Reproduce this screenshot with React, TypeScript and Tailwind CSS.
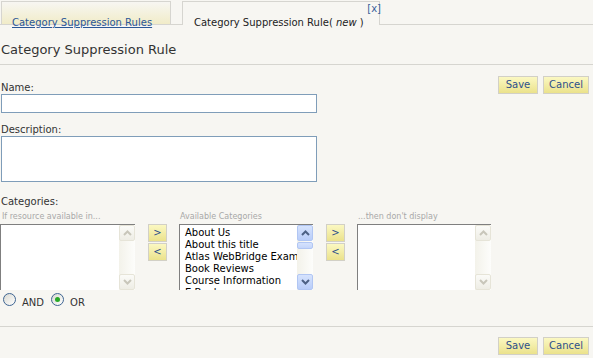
import React from 'react';

const yellowBtn =
  'flex items-center justify-center border border-[#d2d0c6] bg-linear-to-b from-[#fbf8c2] to-[#ebe28b] text-[#2d4f8a] text-[10px] leading-[12px]';

function Chevron({ up, color }: { up?: boolean; color: string }) {
  return (
    <svg width="9" height="6" viewBox="0 0 9 6">
      <path d={up ? 'M1 5 L4.5 1.5 L8 5' : 'M1 1 L4.5 4.5 L8 1'} fill="none" stroke={color} strokeWidth="2" />
    </svg>
  );
}

function Scrollbar({ active }: { active?: boolean }) {
  const btn = active
    ? 'h-[16px] rounded-[2px] border border-[#b1c6f3] bg-linear-to-b from-[#d6e3fd] to-[#b9cdf9] flex items-center justify-center'
    : 'h-[16px] rounded-[2px] border border-[#e6e4d8] bg-linear-to-b from-[#fbfbf8] to-[#eeede5] flex items-center justify-center';
  const arrow = active ? '#4d6185' : '#c8c6ba';
  return (
    <div className="w-[16px] h-full flex flex-col bg-linear-to-r from-[#f3f2ea] to-[#fdfdfb]">
      <div className={btn}>
        <Chevron up color={arrow} />
      </div>
      {active && (
        <div className="mt-[1px] h-[7px] rounded-[2px] border border-[#b1c6f3] bg-linear-to-b from-[#d6e3fd] to-[#c4d5fa]" />
      )}
      <div className="flex-1" />
      <div className={btn}>
        <Chevron color={arrow} />
      </div>
    </div>
  );
}

function ListBox({ items, active, width }: { items?: string[]; active?: boolean; width: string }) {
  return (
    <div className={`${width} h-[66px] flex border-t border-l border-[#7f7f7f] bg-white overflow-hidden`}>
      <div className="flex-1 overflow-hidden pt-[2px] pl-[5px] text-[10px] leading-[12px] text-black whitespace-nowrap">
        {items?.map((item) => (
          <div key={item}>{item}</div>
        ))}
      </div>
      <Scrollbar active={active} />
    </div>
  );
}

function MoveButtons() {
  return (
    <div className="pt-[13px] flex flex-col gap-[1px]">
      <div className={`${yellowBtn} w-[19px] h-[18px] text-[8px]`}>&gt;</div>
      <div className={`${yellowBtn} w-[19px] h-[18px] text-[8px]`}>&lt;</div>
    </div>
  );
}

function Radio({ checked }: { checked?: boolean }) {
  return (
    <span className="w-[13px] h-[13px] rounded-full border border-[#3f6592] bg-linear-to-br from-[#d9d9d2] to-white flex items-center justify-center">
      {checked && <span className="w-[5px] h-[5px] rounded-full bg-[#27a927]" />}
    </span>
  );
}

export default function App() {
  const categories = [
    'About Us',
    'About this title',
    'Atlas WebBridge Example',
    'Book Reviews',
    'Course Information',
    'E-Books',
  ];

  return (
    <div className="w-[593px] h-[358px] overflow-hidden bg-[#f7f6f2] text-[#333] font-['DejaVu_Sans',Verdana,sans-serif]">
      {/* tabs */}
      <div className="h-[25px] pt-[1px] flex border-b border-[#d6d5d0]">
        <div className="ml-[1px] w-[170px] h-[23px] border-t border-l border-r border-[#d6d5d0] bg-linear-to-b from-[#f7f6f2] to-[#f1ecc8] pl-[10px] pt-[7px]">
          <span className="text-[10px] leading-[12px] text-[#2b5797] underline">Category Suppression Rules</span>
        </div>
        <div className="relative ml-[11px] w-[198px] h-[24px] border-t border-l border-r border-[#d6d5d0] bg-[#f7f6f2] pl-[11px] pt-[7px]">
          <span className="text-[10px] leading-[12px] text-[#222]">
            Category Suppression Rule( <i>new</i> )
          </span>
          <span className="absolute right-[-2px] top-[1px] text-[10px] leading-[11px] text-[#3a5f9a]">[x]</span>
        </div>
      </div>

      <h1 className="mt-[17px] ml-[1px] text-[13px] leading-[16px] font-normal text-[#333]">Category Suppression Rule</h1>
      <div className="mt-[6px] border-t border-[#d6d5d0]" />

      <div className="flex items-start justify-between">
        <div>
          <div className="mt-[17px] ml-[1px] text-[10px] leading-[12px]">Name:</div>
          <div className="ml-[1px] w-[316px] h-[19px] border border-[#7f9db9] bg-white" />

          <div className="mt-[11px] ml-[1px] text-[10px] leading-[12px]">Description:</div>
          <div className="ml-[1px] w-[316px] h-[46px] border border-[#7f9db9] bg-white" />

          <div className="mt-[14px] ml-[1px] text-[10px] leading-[12px]">Categories:</div>

          <div className="mt-[3px] flex items-start">
            <div>
              <div className="ml-[2px] text-[8px] leading-[11px] text-[#a8a8a8]">If resource available in...</div>
              <div className="mt-[2px]">
                <ListBox width="w-[135px]" />
              </div>
            </div>
            <div className="ml-[13px]">
              <MoveButtons />
            </div>
            <div className="ml-[12px]">
              <div className="ml-[1px] text-[8px] leading-[11px] text-[#a8a8a8]">Available Categories</div>
              <div className="mt-[2px]">
                <ListBox width="w-[134px]" items={categories} active />
              </div>
            </div>
            <div className="ml-[13px]">
              <MoveButtons />
            </div>
            <div className="ml-[12px]">
              <div className="ml-[1px] text-[8px] leading-[11px] text-[#a8a8a8]">...then don't display</div>
              <div className="mt-[2px]">
                <ListBox width="w-[134px]" />
              </div>
            </div>
          </div>

          <div className="mt-[3px] ml-[3px] flex items-start text-[10px] leading-[12px]">
            <Radio />
            <span className="ml-[6px] mt-[4px]">AND</span>
            <span className="ml-[7px]">
              <Radio checked />
            </span>
            <span className="ml-[6px] mt-[4px]">OR</span>
          </div>
        </div>

        <div className="mt-[11px] mr-[4px] flex gap-[5px]">
          <div className={`${yellowBtn} w-[40px] h-[18px]`}>Save</div>
          <div className={`${yellowBtn} w-[46px] h-[18px]`}>Cancel</div>
        </div>
      </div>

      <div className="mt-[17px] border-t border-[#d6d5d0]" />
      <div className="mt-[10px] mr-[4px] flex justify-end gap-[5px]">
        <div className={`${yellowBtn} w-[40px] h-[18px]`}>Save</div>
        <div className={`${yellowBtn} w-[46px] h-[18px]`}>Cancel</div>
      </div>
    </div>
  );
}
